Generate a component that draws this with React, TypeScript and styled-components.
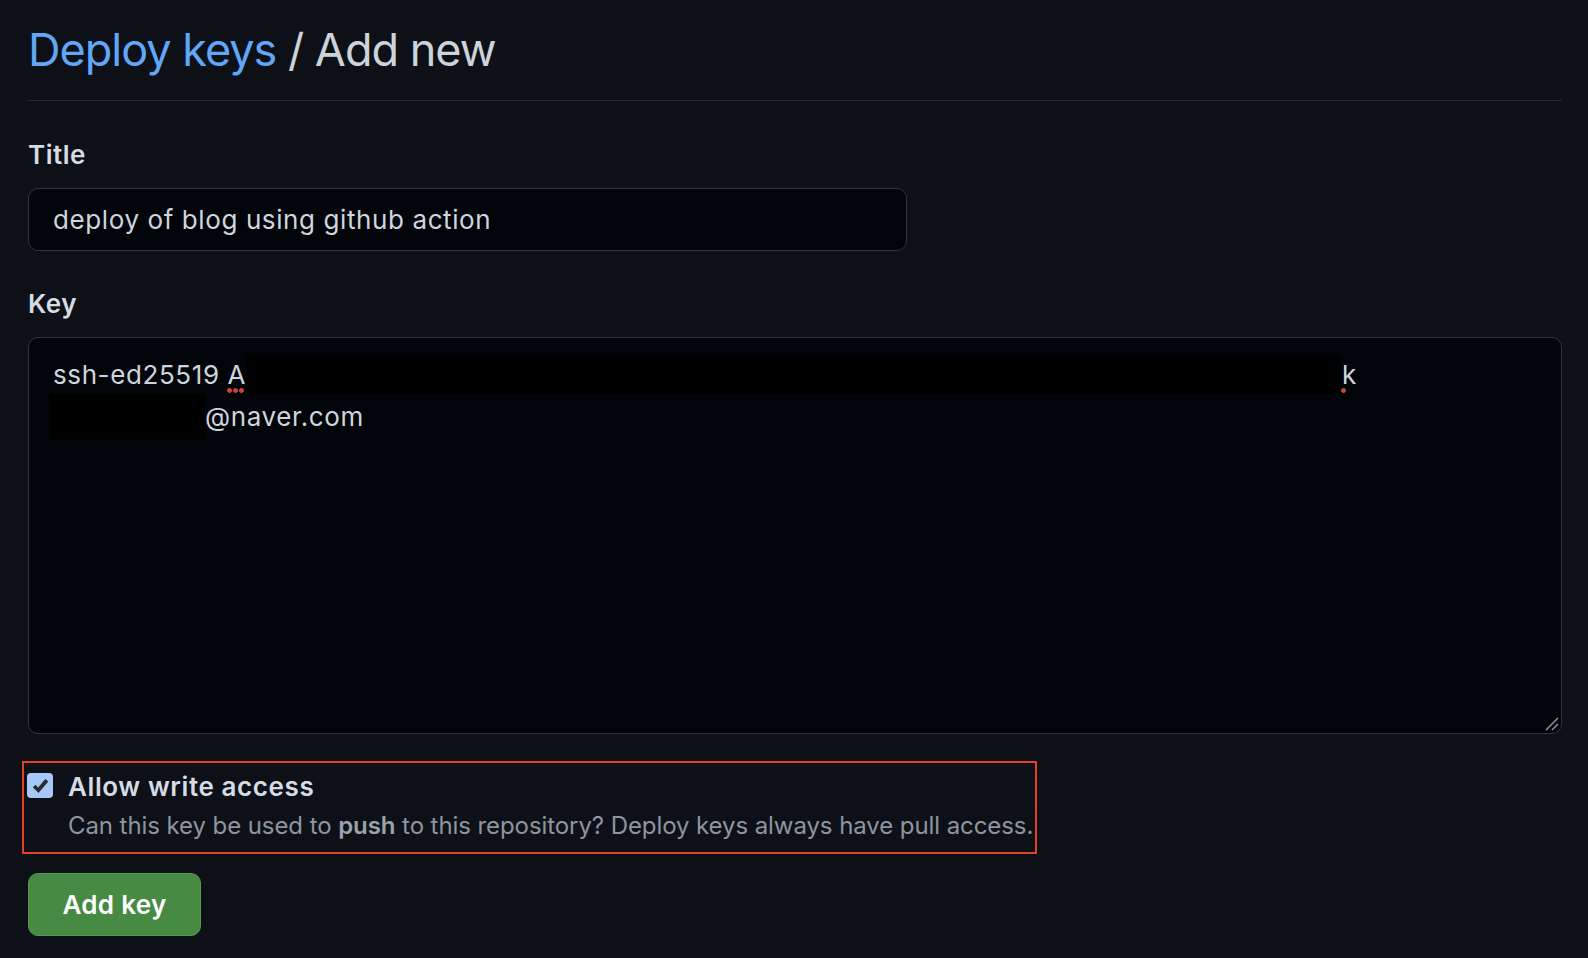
import React from "react";
import styled, { createGlobalStyle } from "styled-components";

const Global = createGlobalStyle`
  html, body { margin: 0; padding: 0; background: #0d1117; }
  body { font-family: Inter, "Noto Sans", "Liberation Sans", sans-serif; color: #c9d1d9; }
  * { box-sizing: border-box; }
`;

const Page = styled.div`
  padding: 22px 26px 0 28px;
  min-height: 958px;
  background: #0d1117;
`;

const HeadingBar = styled.div`
  padding-bottom: 22px;
  border-bottom: 1px solid #262b33;
`;

const Heading = styled.h1`
  margin: 0;
  font-size: 45px;
  line-height: 56px;
  font-weight: 400;
  color: #cdd3da;
  letter-spacing: -1px;
`;

const Crumb = styled.a`
  color: #62a6f7;
  text-decoration: none;
`;

const Field = styled.div<{ $top: number }>`
  display: flex;
  flex-direction: column;
  margin-top: ${(p) => p.$top}px;
`;

const Label = styled.label`
  font-size: 26px;
  line-height: 32px;
  font-weight: 600;
  color: #d6dce3;
  letter-spacing: 0.5px;
  margin-bottom: 17px;
`;

const TextInput = styled.div`
  width: 879px;
  height: 63px;
  display: flex;
  align-items: center;
  padding: 0 24px;
  background: #010409;
  border: 1px solid #30363d;
  border-radius: 10px;
  font-size: 26px;
  letter-spacing: 0.6px;
  color: #cfd5dc;
`;

const TextArea = styled.div`
  position: relative;
  height: 397px;
  padding: 16px 24px;
  background: #010409;
  border: 1px solid #30363d;
  border-radius: 10px;
  font-size: 26px;
  line-height: 42px;
  letter-spacing: 0.6px;
  color: #cfd5dc;
`;

const Line = styled.div`
  white-space: nowrap;
  display: flex;
  align-items: center;
  height: 42px;
`;

const Redact = styled.span<{ $w: number; $h: number; $ml?: number }>`
  display: inline-block;
  width: ${(p) => p.$w}px;
  height: ${(p) => p.$h}px;
  margin-left: ${(p) => p.$ml ?? 0}px;
  background: #000;
`;

const Misspelled = styled.span<{ $dots: number }>`
  position: relative;
  &::after {
    content: "";
    position: absolute;
    left: -1px;
    bottom: 3px;
    width: ${(p) => p.$dots * 6}px;
    height: 5px;
    background-image: radial-gradient(circle at 2.5px 2.5px, #c9433a 2.1px, transparent 2.6px);
    background-size: 6px 5px;
    background-repeat: repeat-x;
  }
`;

const Grip = styled.svg`
  position: absolute;
  right: 2px;
  bottom: 2px;
`;

const Highlight = styled.div`
  margin: 27px 0 0 -6px;
  width: 1015px;
  border: 2px solid #e2402a;
  padding: 8px 3px 11px 3px;
  display: grid;
  grid-template-columns: 26px 1fr;
  column-gap: 15px;
`;

const CheckBox = styled.span`
  width: 26px;
  height: 25px;
  margin-top: 2px;
  border-radius: 4px;
  background: #a6c8fa;
  display: flex;
  align-items: center;
  justify-content: center;
`;

const CheckText = styled.div`
  display: flex;
  flex-direction: column;
  gap: 8px;
`;

const CheckTitle = styled.span`
  font-size: 26px;
  line-height: 32px;
  font-weight: 600;
  letter-spacing: 0.6px;
  color: #d6dce3;
`;

const Note = styled.span`
  font-size: 24px;
  line-height: 30px;
  color: #8d959f;
  letter-spacing: -0.08px;
  white-space: nowrap;
  b { font-weight: 600; color: #9aa2ab; }
`;

const Button = styled.button`
  margin-top: 19px;
  width: 173px;
  height: 63px;
  border-radius: 10px;
  background: #468a44;
  border: 1px solid #56975a;
  color: #ffffff;
  font-family: inherit;
  font-size: 26px;
  font-weight: 600;
  letter-spacing: 0.3px;
  cursor: pointer;
`;

export default function App() {
  return (
    <>
      <Global />
      <Page>
        <HeadingBar>
          <Heading>
            <Crumb href="#">Deploy keys</Crumb> / Add new
          </Heading>
        </HeadingBar>

        <Field $top={38}>
          <Label>Title</Label>
          <TextInput>deploy of blog using github action</TextInput>
        </Field>

        <Field $top={37}>
          <Label>Key</Label>
          <TextArea>
            <Line>
              ssh-ed25519&nbsp;<Misspelled $dots={3}>A</Misspelled>
              <Redact $w={1096} $h={38} />
              <Misspelled $dots={1}>k</Misspelled>
            </Line>
            <Line>
              <Redact $w={156} $h={46} $ml={-4} />
              @naver.com
            </Line>
            <Grip width="14" height="14" viewBox="0 0 14 14">
              <path d="M1 13 L13 1 M7 13 L13 7" stroke="#8b949e" strokeWidth="1.5" />
            </Grip>
          </TextArea>
        </Field>

        <Highlight>
          <CheckBox>
            <svg width="19" height="17" viewBox="0 0 18 16">
              <path d="M3 8.5 L7 12.5 L15 3" fill="none" stroke="#2b2d31" strokeWidth="3.6" />
            </svg>
          </CheckBox>
          <CheckText>
            <CheckTitle>Allow write access</CheckTitle>
            <Note>
              Can this key be used to <b>push</b> to this repository? Deploy keys always have pull access.
            </Note>
          </CheckText>
        </Highlight>

        <Button>Add key</Button>
      </Page>
    </>
  );
}
